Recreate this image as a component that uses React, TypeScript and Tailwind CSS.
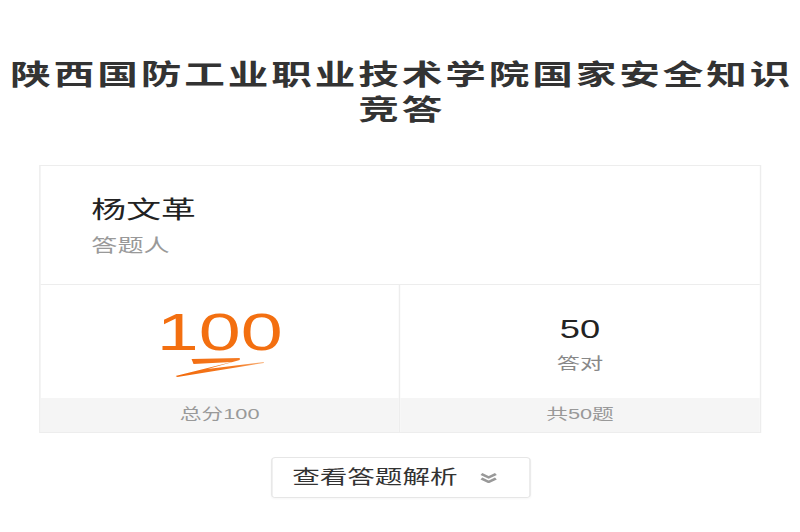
import React from 'react';

// The source screen is a narrow mobile page shown stretched to 800px wide,
// so the whole page is laid out at 552px and widened on the x axis.
const FONT = { fontFamily: '"Liberation Sans", "Noto Sans CJK SC", sans-serif' };

function Swoosh() {
  return (
    <svg
      viewBox="0 0 88 20"
      preserveAspectRatio="none"
      className="block w-[61px] h-[20px] mx-auto"
    >
      <defs>
        <linearGradient id="sw" x1="0" y1="0" x2="1" y2="0">
          <stop offset="0" stopColor="#f26a0c" />
          <stop offset="0.7" stopColor="#f47a22" />
          <stop offset="1" stopColor="#f8b47f" />
        </linearGradient>
      </defs>
      <path
        d="M16 1 L64 0 L64 2 L32 11 L88 4 L88 5 L2 19 L0 18 L24 12 L56 4 L18 6 Z"
        fill="url(#sw)"
      />
    </svg>
  );
}

function Chevrons() {
  return (
    <svg viewBox="0 0 12 10" className="w-[12px] h-[10px]" fill="none">
      <polyline points="1,1 6,4.5 11,1" stroke="#999" strokeWidth="2.2" />
      <polyline points="1,5.5 6,9 11,5.5" stroke="#999" strokeWidth="2.2" />
    </svg>
  );
}

export default function App() {
  return (
    <div className="w-[800px] h-[532px] overflow-hidden bg-white" style={FONT}>
      <div className="w-[552px] origin-top-left scale-x-145 pt-[58px]">
        {/* Title */}
        <h1 className="pl-[2px] text-center text-[28px] leading-[35px] font-bold tracking-[2px] text-[#333]">
          陕西国防工业职业技术学院国家安全知识
          <br />
          竞答
        </h1>

        {/* Result card */}
        <div className="mx-[27px] mt-[37px] border border-[#ededed]">
          <div className="h-[119px] border-b border-[#ededed] pl-[35px] pt-[28px]">
            <div className="text-[24px] leading-[32px] text-[#222]">杨文革</div>
            <div className="mt-[8px] text-[18px] leading-[24px] text-[#999]">答题人</div>
          </div>

          <div className="grid grid-cols-2">
            <div className="border-r border-[#ededed]">
              <div className="h-[113px] pt-[21px]">
                <div className="text-center text-[52px] leading-[52px] text-[#f36f10]">100</div>
                <Swoosh />
              </div>
              <div className="h-[34px] bg-[#f5f5f5] text-center text-[15px] leading-[32px] text-[#999]">
                总分100
              </div>
            </div>
            <div>
              <div className="h-[113px] pt-[29px] text-center">
                <div className="text-[25px] leading-[30px] text-[#222]">50</div>
                <div className="mt-[10px] text-[16px] leading-[20px] text-[#888]">答对</div>
              </div>
              <div className="h-[34px] bg-[#f5f5f5] text-center text-[15px] leading-[32px] text-[#999]">
                共50题
              </div>
            </div>
          </div>
        </div>

        {/* Show answers button */}
        <div className="mt-[24px] flex justify-center">
          <button className="flex h-[41px] w-[179px] items-center rounded-[3px] border border-[#e6e6e6] bg-white pl-[14px] shadow-[0_1px_2px_rgba(0,0,0,0.04)]">
            <span className="text-[19px] leading-[24px] text-[#333]">查看答题解析</span>
            <span className="ml-[15px]">
              <Chevrons />
            </span>
          </button>
        </div>
      </div>
    </div>
  );
}
